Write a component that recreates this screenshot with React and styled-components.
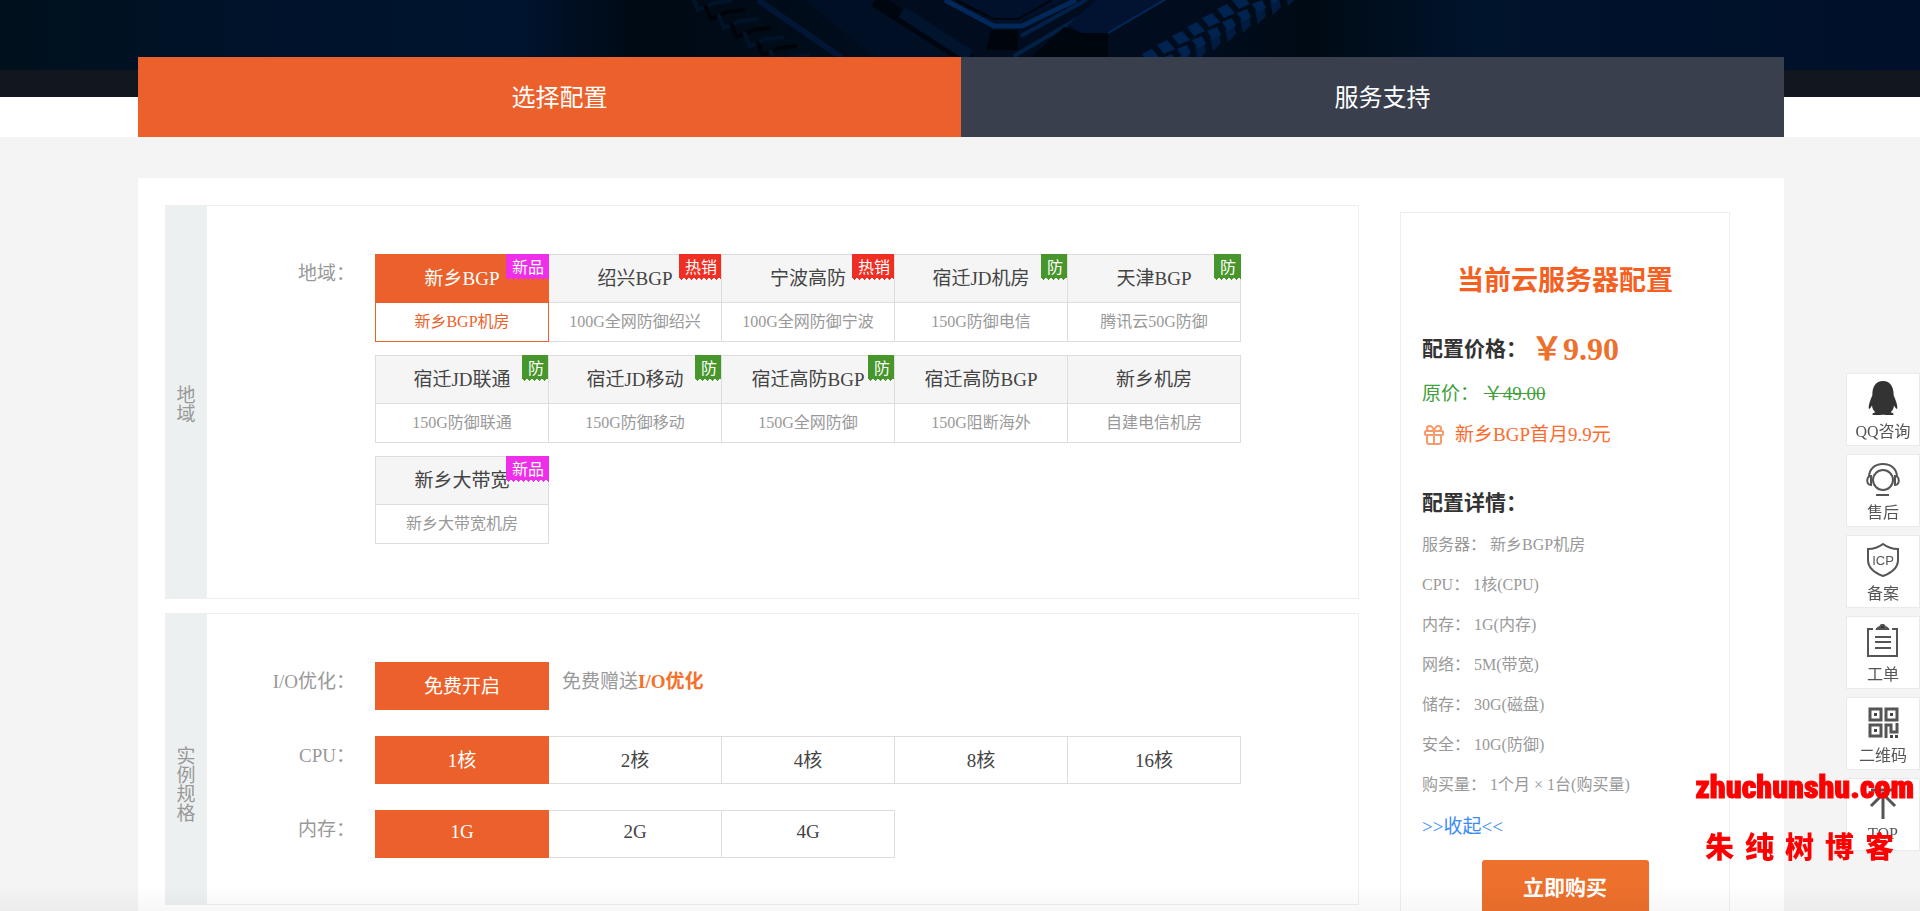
import React, { useState } from "react";
import styled, { createGlobalStyle, css } from "styled-components";
import { FaQq } from "react-icons/fa";
import { Gift } from "lucide-react";

const ORANGE = "#ec612b";

const BADGES = {
    new: { text: "新品", color: "#ee2ee8" },
    hot: { text: "热销", color: "#ef2f24" },
    guard: { text: "防", color: "#47962c" },
};

const REGIONS = [
    { name: "新乡BGP", desc: "新乡BGP机房", badge: "new" },
    { name: "绍兴BGP", desc: "100G全网防御绍兴", badge: "hot" },
    { name: "宁波高防", desc: "100G全网防御宁波", badge: "hot" },
    { name: "宿迁JD机房", desc: "150G防御电信", badge: "guard" },
    { name: "天津BGP", desc: "腾讯云50G防御", badge: "guard" },
    { name: "宿迁JD联通", desc: "150G防御联通", badge: "guard" },
    { name: "宿迁JD移动", desc: "150G防御移动", badge: "guard" },
    { name: "宿迁高防BGP", desc: "150G全网防御", badge: "guard" },
    { name: "宿迁高防BGP", desc: "150G阻断海外" },
    { name: "新乡机房", desc: "自建电信机房" },
    { name: "新乡大带宽", desc: "新乡大带宽机房", badge: "new" },
];

const CPUS = ["1核", "2核", "4核", "8核", "16核"];
const MEMORIES = ["1G", "2G", "4G"];

const HeroArt = () => (
    <HeroSvg viewBox="0 0 680 70" preserveAspectRatio="xMidYMin slice" aria-hidden="true">
        <defs>
            <linearGradient id="edge" x1="0" x2="1" y1="0" y2="0">
                <stop offset="0" stopColor="#000a14" />
                <stop offset="0.45" stopColor="#010d1f" />
                <stop offset="0.8" stopColor="#010d1f" />
                <stop offset="1" stopColor="#000a14" />
            </linearGradient>
        </defs>
        <rect width="680" height="70" fill="url(#edge)" />
        <path d="M118 0L205 60" stroke="#011634" strokeWidth="6" />
        <path d="M165 0H235L330 70H250Z" fill="#010f24" />
        <path d="M235 0L330 60" stroke="#00060f" strokeWidth="14" />
        <path d="M262 12L330 56" stroke="#01142e" strokeWidth="12" />
        {[0, 1, 2, 3, 4, 5, 6, 7].map((i) => (
            <path
                key={i}
                d={`M${52 + i * 13} ${-4 + i * 9}l6 14l16 -7l18 -2`}
                fill="none"
                stroke={i % 2 ? "#00040a" : "#011329"}
                strokeWidth="4"
            />
        ))}
        <path d="M320 0L353 22H381L424 0Z" fill="#01112b" />
        <path d="M305 0L354 26H382L436 0" fill="none" stroke="#02285a" strokeWidth="5" />
        <path d="M316 0L354 19H378L412 0" fill="none" stroke="#00050c" strokeWidth="2" />
        <path d="M351 30H378V50H346Z" fill="#00040b" />
        <path d="M381 36L446 0" stroke="#022148" strokeWidth="4" />
        <path d="M374 56L452 10" stroke="#022044" strokeWidth="4" />
        <path d="M456 0H524L468 33H442L428 25Z" fill="#011330" />
        <path d="M424 27L442 33H468V58H390Z" fill="#00060e" />
        <path d="M468 33L526 -1" stroke="#02295c" strokeWidth="2" />
        {[0, 1, 2, 3, 4, 5, 6, 7].map((i) => (
            <g key={i} fill="#012350">
                <path d={`M${502 + i * 15} ${54 - i * 9}l10 -5l8 9l-11 5z`} />
                <path d={`M${522 + i * 15} ${58 - i * 9}l10 -4l4 8l-8 5z`} />
                <path d={`M${540 + i * 15} ${56 - i * 9}l9 -3l2 8l-8 8z`} opacity="0.7" />
            </g>
        ))}
    </HeroSvg>
);

const HeadsetIcon = () => (
    <ToolSvg viewBox="0 0 34 34">
        <circle cx="17" cy="18" r="10" />
        <path d="M3 15C3 7 9 2 17 2s14 5 14 13" />
        <path d="M5 14c-5 0-5 9 0 9zM29 14c5 0 5 9 0 9z" />
        <path d="M10 33h13" />
    </ToolSvg>
);

const IcpIcon = () => (
    <ToolSvg viewBox="0 0 34 34">
        <path d="M17 1c4 3 9 5 15 5v11c0 8-7 13-15 16C9 30 2 25 2 17V6c6 0 11-2 15-5z" />
        <text x="17" y="22">
            ICP
        </text>
    </ToolSvg>
);

const OrderIcon = () => (
    <ToolSvg viewBox="0 0 34 34">
        <path d="M7 5H2v27h29V5h-5M10 5h13M9 13h16M9 18h16M9 24h16" />
        <path d="M11 5c1-2 2-2 3-2 1-3 4-3 5 0 1 0 2 0 3 2z" fill="#333" />
    </ToolSvg>
);

const QrIcon = () => (
    <ToolSvg viewBox="0 0 34 34">
        <g strokeWidth="3">
            <path d="M4 4h11v11H4zM20 4h11v11H20zM4 20h11v11H4z" />
            <path d="M20 33V20h5v7h6v-9" />
        </g>
        <path
            d="M8 8h3v3H8zM24 8h3v3h-3zM8 24h3v3H8zM24 30h3v3h-3zM29 30h3v3h-3z"
            fill="#444"
            stroke="none"
        />
    </ToolSvg>
);

const TopIcon = () => (
    <ToolSvg viewBox="0 0 34 34">
        <path d="M5 4h24M17 33V6M5 20L17 8l12 12" strokeWidth="3" />
    </ToolSvg>
);

const TOOLS = [
    { label: "QQ咨询", icon: <FaQq size={34} color="#333" /> },
    { label: "售后", icon: <HeadsetIcon /> },
    { label: "备案", icon: <IcpIcon /> },
    { label: "工单", icon: <OrderIcon /> },
    { label: "二维码", icon: <QrIcon /> },
    { label: "TOP", icon: <TopIcon />, tight: true },
];

const OptionRow = ({ label, options, value, onChange, children }) => (
    <RowWithStyled>
        <RowLabel>{label}：</RowLabel>
        <Options>
            {options.map((option) => (
                <Option
                    key={option}
                    type="button"
                    $active={option === value}
                    onClick={() => onChange && onChange(option)}
                >
                    {option}
                </Option>
            ))}
        </Options>
        {children}
    </RowWithStyled>
);

const App = () => {
    const [tab, setTab] = useState("选择配置");
    const [regionIndex, setRegionIndex] = useState(0);
    const [cpu, setCpu] = useState("1核");
    const [memory, setMemory] = useState("1G");
    const [isOpen, setIsOpen] = useState(true);

    const details = [
        ["服务器", REGIONS[regionIndex].desc],
        ["CPU", cpu + "(CPU)"],
        ["内存", memory + "(内存)"],
        ["网络", "5M(带宽)"],
        ["储存", "30G(磁盘)"],
        ["安全", "10G(防御)"],
        ["购买量", "1个月 × 1台(购买量)"],
    ];

    return (
        <>
            <GlobalStyle />
            <Hero>
                <HeroArt />
            </Hero>
            <TabBand>
                <Tabs>
                    {["选择配置", "服务支持"].map((name) => (
                        <Tab
                            key={name}
                            type="button"
                            $active={name === tab}
                            onClick={() => setTab(name)}
                        >
                            {name}
                        </Tab>
                    ))}
                </Tabs>
            </TabBand>

            <Main>
                <Card>
                    <Groups>
                        <Group>
                            <GroupSide>
                                <GroupTitle>地域</GroupTitle>
                            </GroupSide>
                            <GroupBody $bottom={54}>
                                <RowWithStyled>
                                    <RowLabel>地域：</RowLabel>
                                    <RegionGrid>
                                        {REGIONS.map((region, i) => (
                                            <Region
                                                key={region.desc}
                                                type="button"
                                                $active={i === regionIndex}
                                                onClick={() => setRegionIndex(i)}
                                            >
                                                <RegionName>{region.name}</RegionName>
                                                <RegionDesc>{region.desc}</RegionDesc>
                                                {region.badge && (
                                                    <Badge $color={BADGES[region.badge].color}>
                                                        {BADGES[region.badge].text}
                                                    </Badge>
                                                )}
                                            </Region>
                                        ))}
                                    </RegionGrid>
                                </RowWithStyled>
                            </GroupBody>
                        </Group>

                        <Group>
                            <GroupSide>
                                <GroupTitle>实例规格</GroupTitle>
                            </GroupSide>
                            <GroupBody $bottom={46}>
                                <OptionRow
                                    label="I/O优化"
                                    options={["免费开启"]}
                                    value="免费开启"
                                >
                                    <Note>
                                        免费赠送<b>I/O优化</b>
                                    </Note>
                                </OptionRow>
                                <OptionRow
                                    label="CPU"
                                    options={CPUS}
                                    value={cpu}
                                    onChange={setCpu}
                                />
                                <OptionRow
                                    label="内存"
                                    options={MEMORIES}
                                    value={memory}
                                    onChange={setMemory}
                                />
                            </GroupBody>
                        </Group>
                    </Groups>

                    <Summary>
                        <SummaryTitle>当前云服务器配置</SummaryTitle>
                        <PriceRow>
                            配置价格：<Price>￥9.90</Price>
                        </PriceRow>
                        <OldPrice>
                            原价： <del>￥49.00</del>
                        </OldPrice>
                        <Promo>
                            <Gift size={24} strokeWidth={2} color="#f79a6c" />
                            新乡BGP首月9.9元
                        </Promo>
                        <DetailTitle>配置详情：</DetailTitle>
                        {isOpen && (
                            <DetailList>
                                {details.map(([name, value]) => (
                                    <li key={name}>
                                        {name}： {value}
                                    </li>
                                ))}
                            </DetailList>
                        )}
                        <Toggle type="button" onClick={() => setIsOpen(!isOpen)}>
                            {isOpen ? ">>收起<<" : ">>展开<<"}
                        </Toggle>
                        <BuyButton type="button">立即购买</BuyButton>
                    </Summary>
                </Card>
            </Main>

            <Toolbar>
                {TOOLS.map(({ label, icon, tight }) => (
                    <Tool key={label} href="#" $tight={tight}>
                        {icon}
                        {label}
                    </Tool>
                ))}
            </Toolbar>

            <BottomShade />

            <Watermark>
                <Domain>zhuchunshu.com</Domain>
                <BlogName>
                    {[..."朱纯树博客"].map((char) => (
                        <span key={char}>{char}</span>
                    ))}
                </BlogName>
            </Watermark>
        </>
    );
};

const GlobalStyle = createGlobalStyle`
    * {
        box-sizing: border-box;
    }

    html {
        scrollbar-width: none;
    }

    body {
        margin: 0;
        min-height: 100vh;
        background: #f4f4f4;
        color: #999;
        font-family: "Liberation Serif", "Noto Sans CJK SC", serif;
        font-size: 19px;
    }

    button {
        padding: 0;
        border: 0;
        background: none;
        color: inherit;
        font: inherit;
        cursor: pointer;
    }
`;

const Hero = styled.header`
    display: flex;
    justify-content: center;
    height: 97px;
    border-bottom: 27px solid #12161f;
    background: linear-gradient(
        90deg,
        #00101c 0,
        #00132b 14%,
        #00142f 27%,
        #000a14 33%,
        #000a14 68%,
        #00142c 77%,
        #00112a 90%,
        #00102a 100%
    );
`;

const HeroSvg = styled.svg`
    width: 680px;
    height: 70px;
    margin-left: 40px;
`;

const TabBand = styled.div`
    display: flex;
    height: 40px;
    padding: 0 136px 0 138px;
    background: #fff;
`;

const Tabs = styled.nav`
    flex: 1;
    display: flex;
    height: 80px;
    margin-top: -40px;
`;

const Tab = styled.button`
    flex: 1;
    padding: 0 0 3px 20px;
    background: ${({ $active }) => ($active ? ORANGE : "#3a3f4d")};
    color: #fff;
    font-size: 24px;
`;

const Main = styled.main`
    padding: 41px 136px 0 138px;
`;

const Card = styled.div`
    display: flex;
    align-items: flex-start;
    gap: 41px;
    min-height: 733px;
    padding: 27px 54px 0 27px;
    background: #fff;
`;

const Groups = styled.div`
    flex: 1;
    display: flex;
    flex-direction: column;
    gap: 14px;
`;

const Group = styled.section`
    display: flex;
    border: 1px solid #eee;
    border-left: 0;
`;

const GroupSide = styled.div`
    display: grid;
    grid-template-rows: 46% auto;
    justify-content: center;
    width: 42px;
    background: #ecf0f1;
`;

const GroupTitle = styled.h2`
    grid-row: 2;
    width: 19px;
    margin: 0;
    font-size: 19px;
    font-weight: normal;
    line-height: 19px;
`;

const GroupBody = styled.div`
    flex: 1;
    display: flex;
    flex-direction: column;
    gap: 26px;
    padding: 48px 0 ${({ $bottom }) => $bottom}px;
`;

const RowWithStyled = styled.div`
    display: flex;
    align-items: flex-start;
`;

const RowLabel = styled.div`
    width: 148px;
    margin-right: 20px;
    line-height: 40px;
    text-align: right;
`;

const RegionGrid = styled.div`
    display: grid;
    grid-template-columns: repeat(5, 173px);
    row-gap: 13px;
`;

const RegionName = styled.span`
    border-bottom: 1px solid #ddd;
    background: #f5f5f5;
    color: #444;
    line-height: 47px;
`;

const RegionDesc = styled.span`
    font-size: 16px;
    line-height: 38px;
`;

const Region = styled.button`
    position: relative;
    display: flex;
    flex-direction: column;
    width: 174px;
    border: 1px solid #ddd;

    ${({ $active }) =>
        $active &&
        css`
            z-index: 1;
            border-color: ${ORANGE};
            color: ${ORANGE};

            ${RegionName} {
                border-color: ${ORANGE};
                background: ${ORANGE};
                color: #fff;
            }
        `}

    > span {
        width: 100%;
    }
`;

const Badge = styled.em`
    position: absolute;
    top: -1px;
    right: -1px;
    height: 26px;
    padding: 0 5px 0 6px;
    /* solid label with a row of small teeth below it */
    background:
        linear-gradient(${({ $color }) => $color}, ${({ $color }) => $color}) 0 0 / 100% 23px
            no-repeat,
        conic-gradient(
                from -45deg at 50% 100%,
                ${({ $color }) => $color} 90deg,
                transparent 0
            )
            0 23px / 5px 3px repeat-x;
    color: #fff;
    font-family: "Noto Sans CJK SC", sans-serif;
    font-size: 16px;
    font-style: normal;
    line-height: 24px;
`;

const Options = styled.div`
    display: flex;
    padding-right: 1px;
`;

const Option = styled.button`
    width: 174px;
    height: 48px;
    margin-right: -1px;
    padding-bottom: 4px;
    border: 1px solid #ddd;
    color: #444;

    ${({ $active }) =>
        $active &&
        css`
            z-index: 1;
            border-color: ${ORANGE};
            background: ${ORANGE};
            color: #fff;
        `}
`;

const Note = styled.div`
    margin-left: 13px;
    line-height: 40px;

    b {
        color: #f5712a;
    }
`;

const Summary = styled.aside`
    display: flex;
    flex-direction: column;
    width: 330px;
    margin-top: 7px;
    padding: 48px 21px 24px;
    border: 1px solid #eee;
`;

const SummaryTitle = styled.h2`
    margin: 0;
    color: #f4601f;
    font-size: 27px;
    line-height: 40px;
    text-align: center;
`;

const PriceRow = styled.div`
    display: flex;
    align-items: center;
    gap: 4px;
    margin-top: 24px;
    color: #333;
    font-size: 21px;
    font-weight: bold;
    line-height: 48px;
`;

const Price = styled.span`
    color: #ed702d;
    font-size: 32px;
`;

const OldPrice = styled.div`
    color: #3fa03c;
    line-height: 42px;
`;

const Promo = styled.div`
    display: flex;
    align-items: center;
    gap: 9px;
    color: #ff6b2c;
    line-height: 40px;
`;

const DetailTitle = styled.h3`
    margin: 28px 0 0;
    color: #333;
    font-size: 21px;
    line-height: 40px;
`;

const DetailList = styled.ul`
    margin: 2px 0;
    padding: 0;
    list-style: none;
    font-size: 16px;

    li {
        line-height: 40px;
    }
`;

const Toggle = styled.button`
    align-self: flex-start;
    color: #3a8bf7;
    line-height: 40px;
`;

const BuyButton = styled.button`
    align-self: center;
    width: 167px;
    height: 56px;
    margin-top: 13px;
    padding-bottom: 4px;
    border-radius: 3px;
    background: #ed702d;
    color: #fff;
    font-size: 21px;
    font-weight: bold;
`;

const Toolbar = styled.nav`
    position: fixed;
    right: 0;
    bottom: 60px;
    display: flex;
    flex-direction: column;
    gap: 8px;
`;

const Tool = styled.a`
    display: flex;
    flex-direction: column;
    align-items: center;
    gap: ${({ $tight }) => ($tight ? 4 : 7)}px;
    width: 74px;
    height: 73px;
    padding-top: 7px;
    border: 1px solid #eaeaea;
    background: #fff;
    color: #555;
    font-size: 16px;
    line-height: 20px;
    text-decoration: none;
`;

const ToolSvg = styled.svg`
    flex: none;
    width: 34px;
    height: 34px;
    fill: none;
    stroke: #555;
    stroke-width: 2;

    text {
        fill: #555;
        stroke: none;
        font-family: "Liberation Sans", sans-serif;
        font-size: 13px;
        text-anchor: middle;
    }
`;

const BottomShade = styled.div`
    position: fixed;
    right: 0;
    bottom: 0;
    left: 0;
    height: 26px;
    background: linear-gradient(rgba(0, 0, 0, 0), rgba(0, 0, 0, 0.03));
    pointer-events: none;
`;

const Watermark = styled.div`
    position: fixed;
    right: 6px;
    bottom: 52px;
    display: flex;
    flex-direction: column;
    align-items: flex-end;
    gap: 26px;
    color: #f00;
    font-weight: bold;
    pointer-events: none;
`;

const Domain = styled.div`
    font-family: "Roboto Condensed", "Liberation Sans", sans-serif;
    font-size: 32px;
    font-weight: 900;
    line-height: 36px;
    -webkit-text-stroke: 1px #f00;
`;

const BlogName = styled.div`
    display: flex;
    gap: 11px;
    padding-right: 20px;
    font-family: "Noto Sans CJK SC", sans-serif;
    font-size: 29px;
    font-weight: 900;
    line-height: 28px;
`;

export default App;
